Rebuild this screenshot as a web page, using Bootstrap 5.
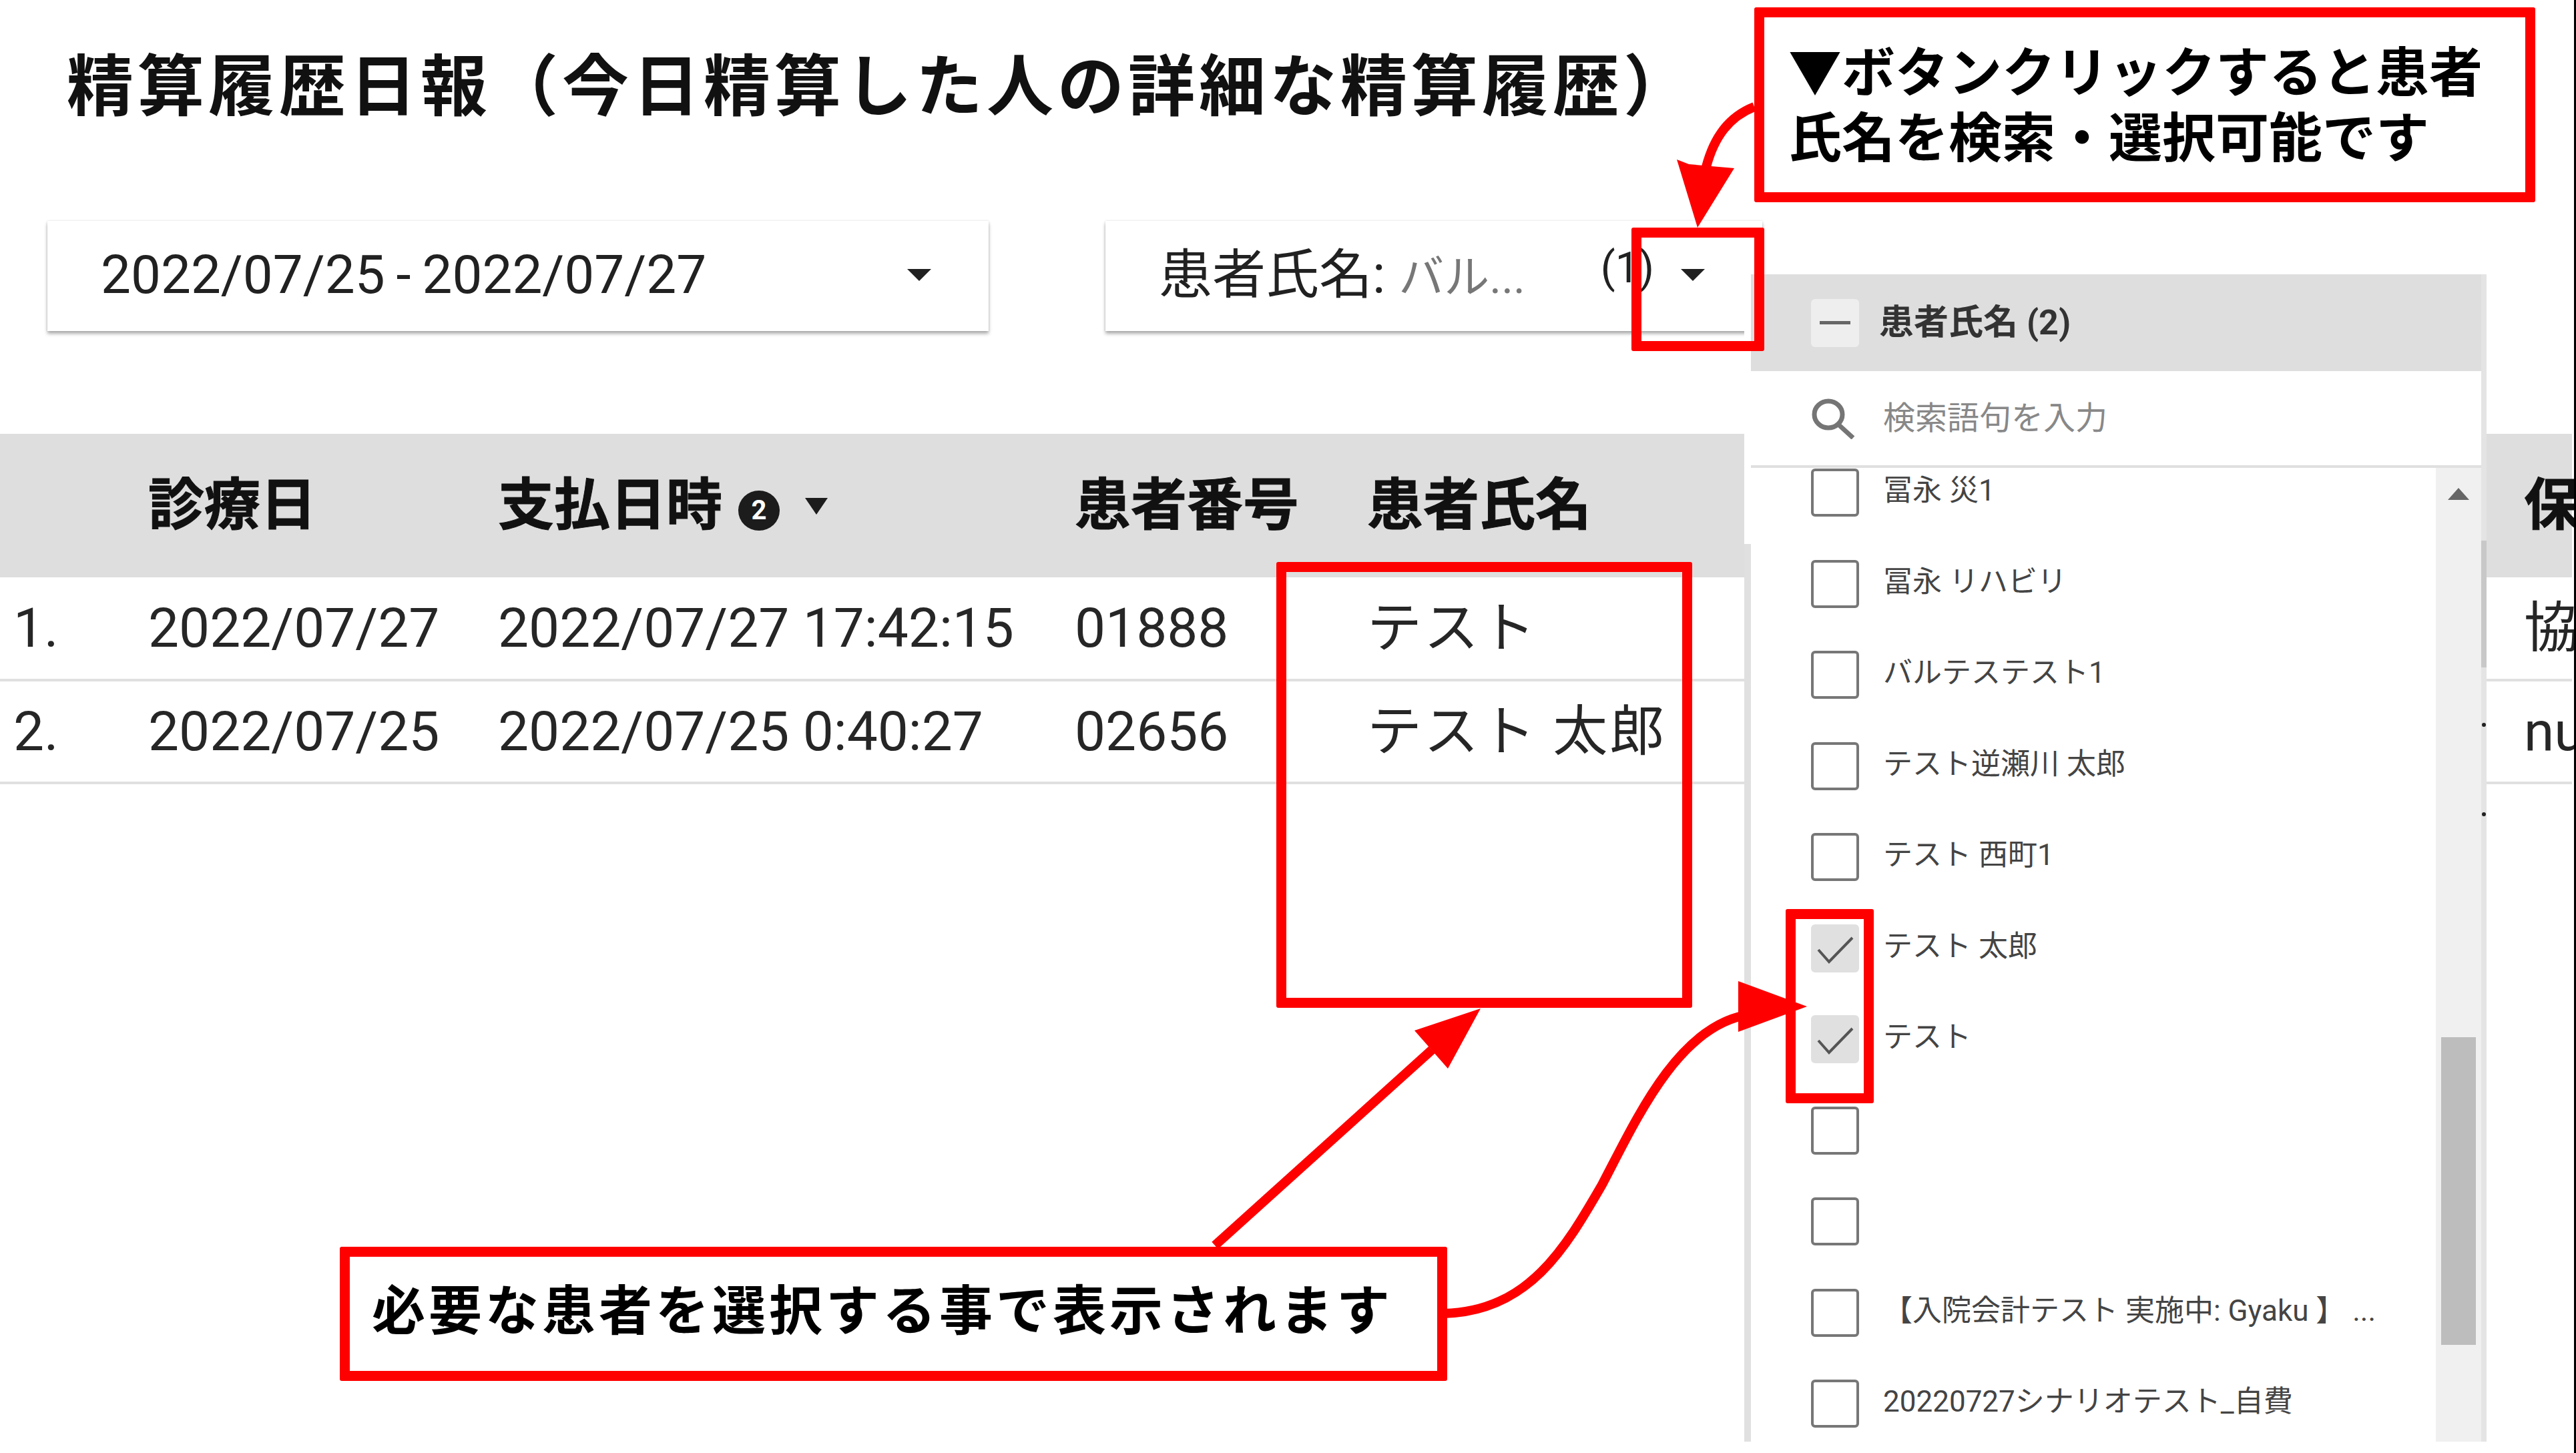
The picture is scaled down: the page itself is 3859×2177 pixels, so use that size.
<!DOCTYPE html>
<html lang="ja">

<head>
    <meta charset="UTF-8">
    <meta name="viewport" content="width=device-width, initial-scale=1.0">
    <title>精算履歴日報</title>
    <link href="https://cdn.jsdelivr.net/npm/bootstrap@5.3.3/dist/css/bootstrap.min.css" rel="stylesheet">
    <style>
        body {
            font-family: Roboto, "Noto Sans CJK JP", sans-serif;
            color: #212121;
            background: #fff;
            overflow: hidden;
        }

        .stage {
            position: relative;
            width: 3859px;
            height: 2177px;
            overflow: hidden;
            border-right: 3px solid #000;
        }

        .page-title {
            height: 244px;
            margin: 0 0 87px;
            padding-left: 100px;
            font-family: "Noto Sans CJK JP", sans-serif;
            font-size: 100px;
            font-weight: 700;
            letter-spacing: 6px;
            color: #111;
        }

        .filter-row {
            height: 165px;
            margin: 0 0 154px 71px;
            gap: 175px;
        }

        .filter-box {
            height: 165px;
            background: #fff;
            box-shadow: 0 4px 5px rgba(0, 0, 0, .32), 0 0 3px rgba(0, 0, 0, .12);
            font-size: 80px;
            padding: 0 86px 4px 80px;
        }

        .filter-date {
            width: 1410px;
            word-spacing: -3px;
        }

        .filter-patient {
            width: 984px;
        }

        .filter-muted {
            font-size: 68px;
            color: #777;
        }

        .filter-count {
            font-size: 64px;
            margin-bottom: 20px;
            margin-right: 40px;
        }

        .caret-down {
            width: 0;
            height: 0;
            border-left: 18px solid transparent;
            border-right: 18px solid transparent;
            border-top: 18px solid #212121;
        }

        .report-table {
            width: 3853px;
            table-layout: fixed;
            border-collapse: collapse;
            font-size: 82px;
        }

        .report-table th,
        .report-table td {
            padding: 0;
            white-space: nowrap;
            overflow: hidden;
            vertical-align: middle;
        }

        .report-table th {
            height: 215px;
            background: #dedede;
            font-size: 84px;
            font-weight: 700;
            color: #111;
            -webkit-text-stroke: 1px #111;
        }

        .report-table td {
            height: 154px;
            border-bottom: 4px solid #e0e0e0;
            color: #262626;
        }

        .report-table .cell-open {
            overflow: visible;
        }

        .report-table .cell-name {
            letter-spacing: 3px;
        }

        .row-no {
            padding-left: 20px !important;
        }

        .help-dot {
            display: inline-flex;
            align-items: center;
            justify-content: center;
            width: 62px;
            height: 60px;
            margin: 0 38px 0 24px;
            border-radius: 50%;
            background: #1c1c1c;
            color: #fff;
            font-size: 40px;
            vertical-align: 8px;
            -webkit-text-stroke: 0;
        }

        .sort-caret {
            display: inline-block;
            width: 0;
            height: 0;
            border-left: 17px solid transparent;
            border-right: 17px solid transparent;
            border-top: 25px solid #1c1c1c;
            vertical-align: 15px;
        }

        .picker {
            position: absolute;
            left: 2623px;
            top: 411px;
            width: 1094px;
            height: 1749px;
            background: #fff;
            box-shadow: -10px 0 0 #fff, -3px 0 0 #e4e4e4, 8px 0 0 #e4e4e4;
        }

        .gutter-left {
            position: absolute;
            left: -10px;
            top: 404px;
            bottom: 0;
            width: 10px;
            background: #e0e0e0;
        }

        .gutter-right {
            position: absolute;
            left: 100%;
            top: 399px;
            height: 190px;
            width: 8px;
            background: #c8c8c8;
        }

        /* specks of the page behind, left over in the screenshot */
        .gutter-speck {
            position: absolute;
            left: calc(100% + 1px);
            width: 6px;
            height: 6px;
            border-radius: 50%;
            background: #222;
        }

        .picker-head {
            position: relative;
            height: 145px;
            background: #dedede;
            padding-left: 90px;
            gap: 30px;
            font-size: 52px;
            font-weight: 700;
            color: #333;
        }

        .dash-box {
            width: 72px;
            height: 72px;
            border-radius: 6px;
            background: #eee;
        }

        .dash-box i {
            display: block;
            width: 46px;
            height: 5px;
            background: #666;
        }

        .picker-search {
            position: relative;
            height: 145px;
            background: #fff;
            border-bottom: 4px solid #e0e0e0;
            padding-left: 90px;
            gap: 42px;
            font-size: 48px;
            color: #888;
        }

        .picker-body {
            position: relative;
            height: 1459px;
            background: #fff;
            overflow: hidden;
        }

        .picker-list {
            margin: -31px 68px 0 0;
            padding: 0;
            list-style: none;
        }

        .picker-list li {
            height: 136.5px;
            padding-left: 90px;
            gap: 36px;
            font-size: 44px;
            color: #444;
            white-space: nowrap;
        }

        .tick-box {
            flex: none;
            width: 72px;
            height: 72px;
            border: 4px solid #777;
            border-radius: 6px;
            background: #fff;
        }

        .tick-box.on {
            border-color: #e0e0e0;
            background: #e0e0e0;
        }

        .tick-box svg {
            display: block;
        }

        .item-name {
            margin-bottom: 6px;
        }

        .picker-track {
            position: absolute;
            right: 0;
            top: 0;
            bottom: 0;
            width: 68px;
            background: #f0f0f0;
        }

        .track-up {
            position: absolute;
            left: 18px;
            top: 30px;
            width: 0;
            height: 0;
            border-left: 16px solid transparent;
            border-right: 16px solid transparent;
            border-bottom: 18px solid #666;
        }

        .track-thumb {
            position: absolute;
            left: 8px;
            top: 853px;
            width: 52px;
            height: 461px;
            background: #bdbdbd;
        }

        .note-frame {
            position: absolute;
            border: 15px solid #f00;
            border-radius: 3px;
        }

        .note-text {
            background: #fff;
            font-family: "Noto Sans CJK JP", sans-serif;
            font-weight: 700;
            color: #000;
            font-size: 80px;
        }

        .note-top {
            left: 2628px;
            top: 11px;
            width: 1170px;
            height: 292px;
            padding: 27px 0 0 36px;
            line-height: 98px;
        }

        .note-bottom {
            left: 509px;
            top: 1868px;
            width: 1659px;
            height: 201px;
            padding: 0 0 24px 33px;
            letter-spacing: 5px;
        }

        .frame-caret {
            left: 2444px;
            top: 341px;
            width: 199px;
            height: 185px;
        }

        .frame-name {
            left: 1912px;
            top: 842px;
            width: 623px;
            height: 668px;
        }

        .frame-check {
            left: 2675px;
            top: 1362px;
            width: 132px;
            height: 291px;
        }

        .note-arrows {
            position: absolute;
            left: 0;
            top: 0;
        }
    </style>
</head>

<body>
    <div class="stage">
        <h1 class="page-title d-flex align-items-center">精算履歴日報（今日精算した人の詳細な精算履歴）</h1>

        <div class="filter-row d-flex">
            <div class="filter-box filter-date d-flex align-items-center justify-content-between">
                <span>2022/07/25 - 2022/07/27</span>
                <span class="caret-down"></span>
            </div>
            <div class="filter-box filter-patient d-flex align-items-center">
                <span>患者氏名: <span class="filter-muted">バル...</span></span>
                <span class="filter-count ms-auto">(1)</span>
                <span class="caret-down"></span>
            </div>
        </div>

        <table class="report-table">
            <colgroup>
                <col style="width:222px">
                <col style="width:524px">
                <col style="width:864px">
                <col style="width:438px">
                <col style="width:1733px">
                <col style="width:72px">
            </colgroup>
            <thead>
                <tr>
                    <th></th>
                    <th>診療日</th>
                    <th>支払日時<span class="help-dot">2</span><span class="sort-caret"></span></th>
                    <th>患者番号</th>
                    <th>患者氏名</th>
                    <th class="cell-open">保険</th>
                </tr>
            </thead>
            <tbody id="report-rows"></tbody>
        </table>

        <div class="picker">
            <span class="gutter-left"></span>
            <span class="gutter-right"></span>
            <span class="gutter-speck" style="top:672px"></span>
            <span class="gutter-speck" style="top:806px"></span>
            <div class="picker-head d-flex align-items-center">
                <span class="dash-box d-flex align-items-center justify-content-center"><i></i></span>
                <span>患者氏名 (2)</span>
            </div>
            <div class="picker-search d-flex align-items-center">
                <svg width="66" height="62" viewBox="0 0 66 62" fill="none" stroke="#757575" stroke-width="7">
                    <ellipse cx="26" cy="25" rx="21" ry="20" />
                    <path d="M41 40L63 60" />
                </svg>
                <span>検索語句を入力</span>
            </div>
            <div class="picker-body">
                <ul class="picker-list" id="patient-list"></ul>
                <div class="picker-track">
                    <span class="track-up"></span>
                    <span class="track-thumb"></span>
                </div>
            </div>
        </div>

        <div class="note-frame note-text note-top">▼ボタンクリックすると患者<br>氏名を検索・選択可能です</div>
        <div class="note-frame frame-caret"></div>
        <div class="note-frame frame-name"></div>
        <div class="note-frame frame-check"></div>
        <div class="note-frame note-text note-bottom d-flex align-items-center">必要な患者を選択する事で表示されます</div>

        <svg class="note-arrows" width="3859" height="2177" viewBox="0 0 3859 2177" fill="none">
            <path d="M2628 160C2590 175 2568 205 2556 250" stroke="#f00" stroke-width="14" />
            <path d="M2543 341L2512 239L2530 246L2598 252Z" fill="#f00" />
            <path d="M1820 1866L2145 1573" stroke="#f00" stroke-width="14" />
            <path d="M2218 1511L2119 1544L2169 1601Z" fill="#f00" />
            <path d="M2163 1968C2290 1965 2345 1870 2400 1775C2450 1680 2510 1545 2610 1522" stroke="#f00" stroke-width="14" />
            <path d="M2707 1508L2604 1470V1546Z" fill="#f00" />
        </svg>
    </div>

    <script>
        const rows = [
            { no: '1.', visit: '2022/07/27', paid: '2022/07/27 17:42:15', id: '01888', name: 'テスト', ins: '協会' },
            { no: '2.', visit: '2022/07/25', paid: '2022/07/25 0:40:27', id: '02656', name: 'テスト 太郎', ins: 'null' }
        ];
        document.getElementById('report-rows').innerHTML = rows.map(r =>
            `<tr><td class="row-no">${r.no}</td><td>${r.visit}</td><td>${r.paid}</td><td>${r.id}</td><td class="cell-name">${r.name}</td><td class="cell-open">${r.ins}</td></tr>`
        ).join('');

        const patients = [
            { name: '冨永 災1' },
            { name: '冨永 リハビリ' },
            { name: 'バルテステスト1' },
            { name: 'テスト逆瀬川 太郎' },
            { name: 'テスト 西町1' },
            { name: 'テスト 太郎', on: true },
            { name: 'テスト', on: true },
            { name: '' },
            { name: '' },
            { name: '【入院会計テスト 実施中: Gyaku 】 ...' },
            { name: '20220727シナリオテスト_自費' }
        ];
        const tick = '<svg width="64" height="64" viewBox="0 0 64 64" fill="none" stroke="#555" stroke-width="4"><path d="M7 34L23 52L58 16"/></svg>';
        document.getElementById('patient-list').innerHTML = patients.map(p =>
            `<li class="d-flex align-items-center"><span class="tick-box${p.on ? ' on' : ''}">${p.on ? tick : ''}</span><span class="item-name">${p.name}</span></li>`
        ).join('');
    </script>
    <script src="https://cdn.jsdelivr.net/npm/bootstrap@5.3.3/dist/js/bootstrap.bundle.min.js"></script>
</body>

</html>
